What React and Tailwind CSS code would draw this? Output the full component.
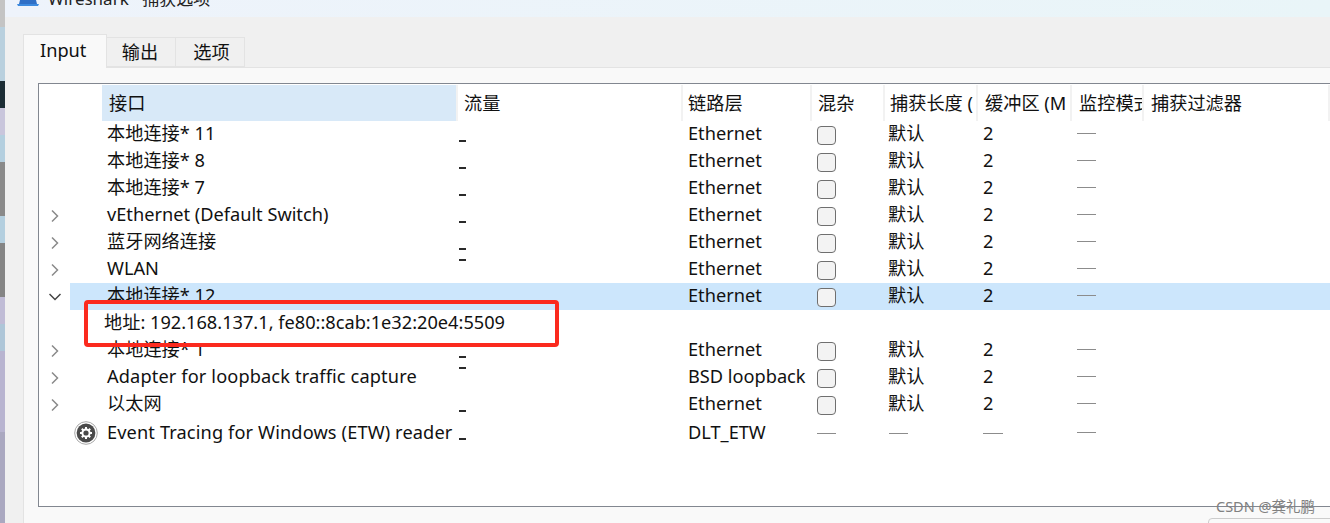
const CJK = "font-['Noto_Sans','Noto_Sans_CJK_SC',sans-serif]";

const GRID = "grid grid-cols-[31px_32px_356px_225px_129px_73px_93px_94px_72px_1fr]";
const CELL = "flex items-center whitespace-nowrap";

const HEADERS = [
  { label: "接口", w: "bg-[#d8e9f8] pl-[7px]" },
  { label: "流量", w: "pl-[6px]" },
  { label: "链路层", w: "pl-[5px]" },
  { label: "混杂", w: "pl-[6px]" },
  { label: "捕获长度 (", w: "pl-[5px]" },
  { label: "缓冲区 (M", w: "pl-[7px]" },
  { label: "监控模式", w: "pl-[7px]" },
  { label: "捕获过滤器", w: "pl-[7px]" },
];

const ROWS = [
  { name: "本地连接* 11", dash: "mt-[19px]" },
  { name: "本地连接* 8", dash: "mt-[19px]" },
  { name: "本地连接* 7", dash: "mt-[19px]" },
  { name: "vEthernet (Default Switch)", arrow: "right", dash: "mt-[19px]" },
  { name: "蓝牙网络连接", arrow: "right", dash: "mt-[19px]" },
  { name: "WLAN", arrow: "right", dash: "mt-[3px]" },
  { name: "本地连接* 12", arrow: "down", selected: true },
  { address: "地址: 192.168.137.1, fe80::8cab:1e32:20e4:5509" },
  { name: "本地连接* 1", arrow: "right", dash: "mt-[19px]" },
  { name: "Adapter for loopback traffic capture", arrow: "right", link: "BSD loopback", dash: "mt-[3px]", wide: true },
  { name: "以太网", arrow: "right", dash: "mt-[19px]" },
  { name: "Event Tracing for Windows (ETW) reader", etw: true, link: "DLT_ETW", dash: "mt-[20px]", wide: true },
];

function Chevron({ dir }) {
  return (
    <svg width="12" height="14" viewBox="0 0 12 14" fill="none" stroke={dir === "down" ? "#444" : "#8a8a8a"} strokeWidth="1.5">
      {dir === "down" ? <path d="M0.5 4 L6 9.5 L11.5 4" /> : <path d="M3 1.5 L8.5 7 L3 12.5" />}
    </svg>
  );
}

function Gear() {
  return (
    <svg width="24" height="24" viewBox="0 0 24 24">
      <circle cx="12" cy="12" r="11.3" fill="#fff" stroke="#a8a8a8" strokeWidth="1" />
      <circle cx="12" cy="12" r="9.4" fill="#4a4a4a" />
      <g stroke="#fff" strokeWidth="2">
        <path d="M12 6V18M6 12H18M7.8 7.8L16.2 16.2M16.2 7.8L7.8 16.2" />
      </g>
      <circle cx="12" cy="12" r="4.6" fill="#fff" />
      <circle cx="12" cy="12" r="2.6" fill="#4a4a4a" />
    </svg>
  );
}

function None({ className = "" }) {
  return <div className={`h-px bg-[#8c8c8c] ${className}`} />;
}

function Row({ row }) {
  if (row.address) {
    return <div className={`${CELL} h-[27px] pb-[4px] pl-[65px]`}>{row.address}</div>;
  }
  const h = row.etw ? "h-[31px]" : "h-[27px]";
  return (
    <div className={`${GRID} ${h} ${row.selected ? "bg-[linear-gradient(to_right,transparent_31px,#cce6fc_31px)]" : ""}`}>
      <div className="flex items-center justify-center">
        {row.arrow && <Chevron dir={row.arrow} />}
      </div>
      <div className="flex items-center justify-end pr-[4px] pb-[2px]">{row.etw && <Gear />}</div>
      <div className={`${CELL} pb-[4px] pl-[5px] ${row.wide ? "tracking-[0.13px]" : ""}`}>{row.name}</div>
      <div className="pl-[1px]">
        {row.dash && <div className={`${row.dash} w-[7px] h-[2px] bg-[#2a2a2a]`} />}
      </div>
      <div className={`${CELL} pb-[4px] pl-[5px]`}>{row.link || "Ethernet"}</div>
      {row.etw ? (
        <>
          <div className="flex items-center pl-[5px]"><None className="w-[19px]" /></div>
          <div className="flex items-center pl-[4px]"><None className="w-[19px]" /></div>
          <div className="flex items-center pl-[5px]"><None className="w-[20px]" /></div>
        </>
      ) : (
        <>
          <div className="flex items-center pl-[5px] pt-[1px]">
            <div className="w-[19px] h-[19px] rounded-[4px] border border-[#6f6f6f] bg-[#f3f3f3]" />
          </div>
          <div className={`${CELL} pb-[4px] pl-[3px]`}>默认</div>
          <div className={`${CELL} pb-[4px] pl-[5px]`}>2</div>
        </>
      )}
      <div className="flex items-center pl-[5px] pb-[2px]"><None className="w-[19px]" /></div>
    </div>
  );
}

export default function App() {
  return (
    <div className={`relative flex w-[1330px] h-[523px] overflow-hidden bg-[#f0f0f0] ${CJK} text-[18.2px] leading-[20px] text-[#111]`}>
      {/* sliver of the desktop behind the window */}
      <div className="w-[5px] flex flex-col shrink-0">
        <div className="h-[27px] bg-[#c4c4c4]" />
        <div className="h-[54px] bg-[#b9d0de]" />
        <div className="h-[27px] bg-[#1c2d35]" />
        <div className="h-[27px] bg-[#c9c6dc]" />
        <div className="h-[27px] bg-[#b4cfdf]" />
        <div className="h-[54px] bg-[#8a8a8a]" />
        <div className="h-[27px] bg-[#b4cfdf]" />
        <div className="h-[54px] bg-[#858585]" />
        <div className="h-[27px] bg-[#c0bcd6]" />
        <div className="h-[27px] bg-[#aec6d8]" />
        <div className="h-[81px] bg-[#b8b4d0]" />
        <div className="flex-1 bg-[#aaa8c0]" />
      </div>
      <div className="flex-1 flex flex-col min-w-0">
        <div className="h-[17px] shrink-0 overflow-hidden flex gap-[9px] pl-[12px] bg-[linear-gradient(to_right,#eef3fb,#e9f5f8)]">
          <svg width="22" height="17" viewBox="0 0 22 17" className="shrink-0">
            <path d="M3 0H19L20 4H2Z" fill="#2f6fc6" />
            <path d="M0 4H22L21 6H1Z" fill="#3d8adf" />
          </svg>
          <div className="-mt-[14px] text-[17px] whitespace-nowrap leading-[26px] text-[#222]">Wireshark · 捕获选项</div>
        </div>
        <div className="flex-1 flex flex-col pl-[18px] min-h-0">
          <div className="flex h-[33px] mt-[17px] items-end shrink-0">
            <div className="h-[34px] w-[84px] z-10 -mb-px bg-[#f9f9f9] border border-b-0 border-[#e3e3e3] flex items-center pl-[16px] pb-[4px]">Input</div>
            <div className="h-[30px] w-[69px] border border-[#e3e3e3] border-l-0 flex items-center justify-center pr-[2px]">输出</div>
            <div className="h-[30px] w-[69px] border border-[#e3e3e3] border-l-0 flex items-center justify-center pl-[3px]">选项</div>
          </div>
          <div className="flex-1 bg-[#f9f9f9] border-l border-t border-[#e3e3e3] pl-[14px] pt-[15px] min-h-0">
            <div className="h-[424px] bg-white border border-r-0 border-[#828790] pt-[1px] overflow-hidden">
              <div className={`${GRID} h-[36px]`}>
                <div />
                <div />
                {HEADERS.map(({ label, w }) => (
                  <div key={label} className={`${CELL} overflow-hidden border-r-2 border-[#f2f2f2] ${w}`}>
                    {label}
                  </div>
                ))}
              </div>
              {ROWS.map((row, i) => (
                <Row key={i} row={row} />
              ))}
            </div>
          </div>
        </div>
      </div>
      {/* red annotation drawn over the screenshot */}
      <div className="absolute left-[84px] top-[300px] w-[475px] h-[47px] border-[4px] border-[#fb2a1e] rounded-[4px]" />
      <div className="absolute left-[1216px] top-[496px] text-[14.5px] text-[#808080] whitespace-nowrap">CSDN @龚礼鹏</div>
      <div className="absolute left-[1208px] top-[518px] w-[130px] h-[20px] rounded-[4px] border border-[#cccccc]" />
    </div>
  );
}
